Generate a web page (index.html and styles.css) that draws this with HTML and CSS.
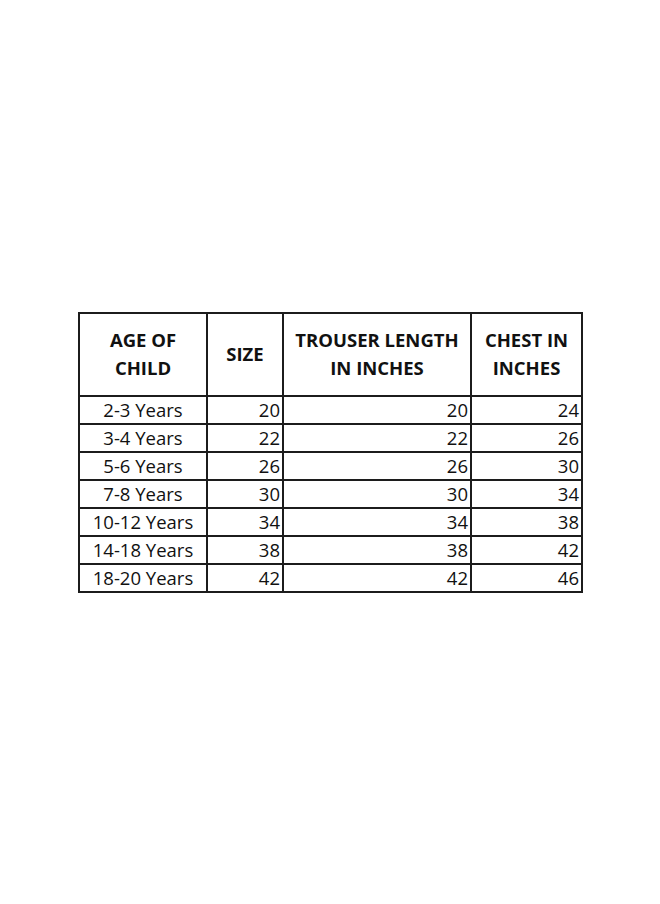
FILE: index.html
```html
<!DOCTYPE html>
<html>
<head>
<meta charset="utf-8">
<link rel="stylesheet" href="styles.css">
</head>
<body>
<div class="page">
  <table class="chart">
    <colgroup>
      <col class="c1"><col class="c2"><col class="c3"><col class="c4">
    </colgroup>
    <thead>
      <tr>
        <th>AGE OF<br>CHILD</th>
        <th>SIZE</th>
        <th>TROUSER LENGTH<br>IN INCHES</th>
        <th>CHEST IN<br>INCHES</th>
      </tr>
    </thead>
    <tbody>
      <tr><td class="age">2-3 Years</td><td>20</td><td>20</td><td>24</td></tr>
      <tr><td class="age">3-4 Years</td><td>22</td><td>22</td><td>26</td></tr>
      <tr><td class="age">5-6 Years</td><td>26</td><td>26</td><td>30</td></tr>
      <tr><td class="age">7-8 Years</td><td>30</td><td>30</td><td>34</td></tr>
      <tr><td class="age">10-12 Years</td><td>34</td><td>34</td><td>38</td></tr>
      <tr><td class="age">14-18 Years</td><td>38</td><td>38</td><td>42</td></tr>
      <tr><td class="age">18-20 Years</td><td>42</td><td>42</td><td>46</td></tr>
    </tbody>
  </table>
</div>
</body>
</html>
```

FILE: styles.css
```css
html, body {
  margin: 0;
  padding: 0;
  background: #ffffff;
}
.page {
  padding-top: 312px;
  padding-left: 78px;
}
.chart {
  border-collapse: collapse;
  table-layout: fixed;
  width: 503px;
  font-family: "Open Sans", "DejaVu Sans", sans-serif;
  font-size: 18.5px;
  color: #111111;
}
.c1 { width: 128px; }
.c2 { width: 76px; }
.c3 { width: 188px; }
.c4 { width: 111px; }
.chart th, .chart td {
  border: 2px solid #1c1c1c;
  padding: 0;
}
.chart th {
  height: 79px;
  padding-bottom: 2px;
  font-weight: 700;
  line-height: 27.5px;
  text-align: center;
  vertical-align: middle;
}
.chart td {
  height: 24px;
  line-height: 22px;
  padding: 0 2px 2px 2px;
  text-align: right;
  vertical-align: bottom;
}
.chart td.age {
  text-align: center;
}
```
